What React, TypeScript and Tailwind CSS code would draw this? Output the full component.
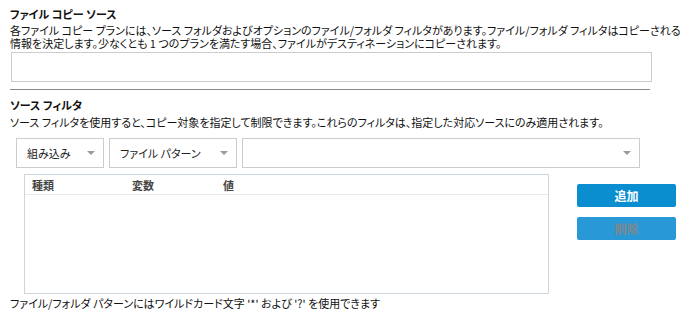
import { ChangeEvent, useState } from 'react'

const font = "font-['Noto_Sans_CJK_JP','Noto_Sans',sans-serif] [font-feature-settings:'palt']"

function Select({ value, width }: { value: string; width: string }): React.JSX.Element {
  return (
    <div
      className={`${width} h-[30px] border border-[#cccccc] bg-white flex items-center justify-between pl-[10px] pr-[8px]`}
    >
      <span className="text-[11px] leading-[12px] text-[#222] whitespace-nowrap">{value}</span>
      <span className="w-0 h-0 border-l-[4px] border-r-[4px] border-t-[4px] border-l-transparent border-r-transparent border-t-[#9a9a9a]" />
    </div>
  )
}

function App(): React.JSX.Element {
  const [source, setSource] = useState('')

  return (
    <div className={`w-[686px] h-[313px] bg-white overflow-hidden pl-[10px] pt-[7px] text-[#111] ${font}`}>
      {/* ファイル コピー ソース */}
      <h2 className="text-[11px] leading-[14px] font-bold">ファイル コピー ソース</h2>
      <div className="mt-[3px] text-[11px] leading-[13px] whitespace-nowrap">
        <p>
          各ファイル コピー プランには、ソース フォルダおよびオプションのファイル/フォルダ フィルタがあります。ファイル/フォルダ フィルタはコピーされる
        </p>
        <p>情報を決定します。少なくとも 1 つのプランを満たす場合、ファイルがデスティネーションにコピーされます。</p>
      </div>
      <input
        value={source}
        onChange={(e: ChangeEvent<HTMLInputElement>) => setSource(e.target.value)}
        className="mt-[2px] ml-[1px] block w-[641px] h-[30px] border border-[#cccccc] outline-none px-2 text-[12px]"
      />
      <div className="mt-[7px] w-[640px] h-px bg-[#8a8a8a]" />

      {/* ソース フィルタ */}
      <h2 className="mt-[8px] text-[11px] leading-[14px] font-bold">ソース フィルタ</h2>
      <p className="mt-[4px] text-[11px] leading-[12px] whitespace-nowrap">
        ソース フィルタを使用すると、コピー対象を指定して制限できます。これらのフィルタは、指定した対応ソースにのみ適用されます。
      </p>

      <div className="mt-[10px] ml-[6px] flex gap-[5px]">
        <Select value="組み込み" width="w-[88px]" />
        <Select value="ファイル パターン" width="w-[128px]" />
        <Select value="" width="w-[398px]" />
      </div>

      <div className="mt-[6px] flex items-start">
        <div className="ml-[14px] w-[525px] h-[120px] border border-[#cdd6de]">
          <div className="h-[20px] border-b border-[#e6eaee] flex items-center pl-[7px] text-[11px] leading-[12px] font-bold text-[#444]">
            <span className="w-[100px]">種類</span>
            <span className="w-[91px]">変数</span>
            <span>値</span>
          </div>
        </div>
        <div className="ml-[28px] mt-[10px] flex flex-col gap-[10px]">
          <button className="w-[99px] h-[23px] rounded-[2px] bg-[#0a8ed0] text-white text-[12px] font-bold leading-[12px]">
            追加
          </button>
          <button
            disabled
            className="w-[99px] h-[23px] rounded-[2px] bg-[#2899d6] text-[#80878c] text-[12px] font-bold leading-[12px]"
          >
            削除
          </button>
        </div>
      </div>

      <p className="mt-[3px] text-[11px] leading-[12px] whitespace-nowrap">
        ファイル/フォルダ パターンにはワイルドカード文字 '*' および '?' を使用できます
      </p>
    </div>
  )
}

export default App
